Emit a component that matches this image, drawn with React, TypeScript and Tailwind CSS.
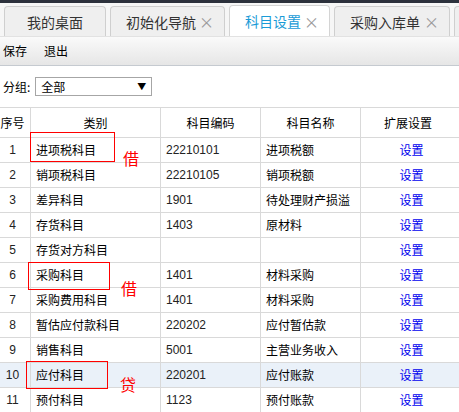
import React from "react";

const font = { fontFamily: '"Noto Sans CJK SC", "Noto Sans", sans-serif' };
const numFont = { fontFamily: '"Liberation Sans", sans-serif' };

interface Row {
  no: number,
  type: string,
  code: string,
  name: string
}

const rows: Row[] = [
  { no: 1, type: "进项税科目", code: "22210101", name: "进项税额" },
  { no: 2, type: "销项税科目", code: "22210105", name: "销项税额" },
  { no: 3, type: "差异科目", code: "1901", name: "待处理财产损溢" },
  { no: 4, type: "存货科目", code: "1403", name: "原材料" },
  { no: 5, type: "存货对方科目", code: "", name: "" },
  { no: 6, type: "采购科目", code: "1401", name: "材料采购" },
  { no: 7, type: "采购费用科目", code: "1401", name: "材料采购" },
  { no: 8, type: "暂估应付款科目", code: "220202", name: "应付暂估款" },
  { no: 9, type: "销售科目", code: "5001", name: "主营业务收入" },
  { no: 10, type: "应付科目", code: "220201", name: "应付账款" },
  { no: 11, type: "预付科目", code: "1123", name: "预付账款" },
];

const tabs = [
  { title: "我的桌面", close: false, active: false, w: "w-[102px]" },
  { title: "初始化导航", close: true, active: false, w: "w-[115px]" },
  { title: "科目设置", close: true, active: true, w: "w-[101px]" },
  { title: "采购入库单", close: true, active: false, w: "w-[116px]" },
  { title: "", close: false, active: false, w: "w-[20px]" },
];

const headers = [
  { label: "序号", cls: "" },
  { label: "类别", cls: "" },
  { label: "科目编码", cls: "" },
  { label: "科目名称", cls: "" },
  { label: "扩展设置", cls: "pr-[25px]" },
];

const cell = "border border-[#d9d9d9] p-0 whitespace-nowrap overflow-hidden leading-[24px]";

export default function App() {
  return (
    <div className="relative w-[459px] h-[412px] overflow-hidden bg-white text-black" style={font}>
      <div className="h-[3px] bg-[#2c313c]" />

      {/* tabs */}
      <div className="flex items-end gap-[4px] h-[34px] pl-[4px] bg-[#f6f6f6] border-b border-[#e2e2e2]">
        {tabs.map((t, i) => (
          <div
            key={i}
            className={`${t.w} shrink-0 flex items-center rounded-t-[4px] border border-b-0 ${
              t.active ? "bg-white border-[#d4d4d4] h-[31px] text-[#1a9bd7]" : "bg-[#efefef] border-[#cfcfcf] h-[30px] text-[#333]"
            } ${t.close ? "pl-[15px]" : "justify-center"}`}
          >
            <span className="text-[14px] leading-none whitespace-nowrap">{t.title}</span>
            {t.close && <span className="ml-auto mr-[10px] text-[15px] leading-none text-[#999]">×</span>}
          </div>
        ))}
      </div>

      {/* toolbar */}
      <div className="h-[29px] flex items-center gap-[17px] pl-[3px] text-[12px] bg-gradient-to-b from-[#fafafa] to-[#e6e6e6] border-b border-[#c5cad0]">
        <span>保存</span>
        <span>退出</span>
      </div>

      {/* filter */}
      <div className="h-[41px] flex items-center pl-[3px] text-[12px]">
        <span className="mr-[5px]">分组:</span>
        <div className="w-[117px] h-[19px] border border-[#a6a6a6] flex items-center px-[5px]">
          <span>全部</span>
          <span className="ml-auto text-[9px] leading-none">▼</span>
        </div>
      </div>

      {/* table */}
      <table className="table-fixed border-collapse ml-[-6px] w-[486px] text-[12px]">
        <colgroup>
          <col className="w-[36px]" />
          <col className="w-[130px]" />
          <col className="w-[100px]" />
          <col className="w-[100px]" />
          <col className="w-[120px]" />
        </colgroup>
        <thead>
          <tr className="h-[30px]">
            {headers.map((h) => (
              <th key={h.label} className={`border border-[#d9d9d9] p-0 whitespace-nowrap font-normal text-center leading-[29px] ${h.cls}`}>{h.label}</th>
            ))}
          </tr>
        </thead>
        <tbody>
          {rows.map((r) => (
            <tr key={r.no} className={`h-[25px] ${r.no === 10 ? "bg-[#eaf1f9]" : ""}`}>
              <td className={`${cell} text-center text-[#222]`} style={numFont}>{r.no}</td>
              <td className={`${cell} pl-[5px]`}>{r.type}</td>
              <td className={`${cell} pl-[5px] text-[#222]`} style={numFont}>{r.code}</td>
              <td className={`${cell} pl-[5px]`}>{r.name}</td>
              <td className={`${cell} text-center pr-[18px] text-[#0000ee]`}>设置</td>
            </tr>
          ))}
        </tbody>
      </table>

      {/* annotations */}
      <div className="absolute left-[30px] top-[132px] w-[85px] h-[30px] border border-[#ff0000]" />
      <span className="absolute left-[123px] top-[150px] text-[16px] leading-none text-[#ff0000]">借</span>
      <div className="absolute left-[28px] top-[262px] w-[82px] h-[28px] border border-[#ff0000]" />
      <span className="absolute left-[121px] top-[280px] text-[16px] leading-none text-[#ff0000]">借</span>
      <div className="absolute left-[26px] top-[361px] w-[82px] h-[28px] border border-[#ff0000]" />
      <span className="absolute left-[120px] top-[376px] text-[16px] leading-none text-[#ff0000]">贷</span>
    </div>
  );
}
